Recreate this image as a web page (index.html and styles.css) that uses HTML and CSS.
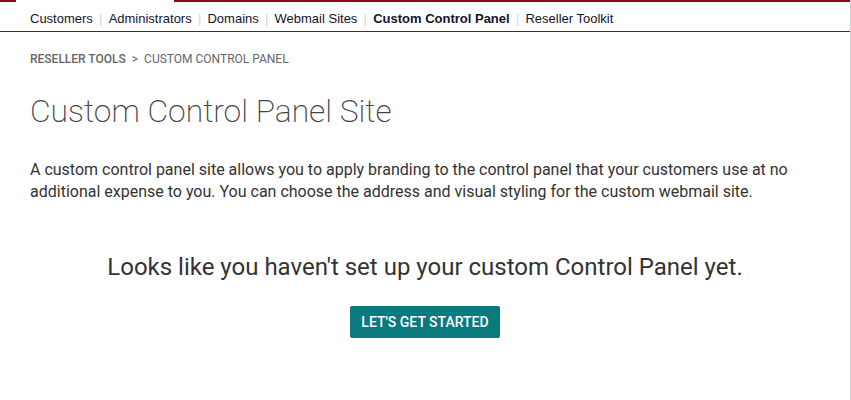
FILE: index.html
```html
<!DOCTYPE html>
<html>
<head>
<meta charset="utf-8">
<link rel="stylesheet" href="styles.css">
</head>
<body>
<div class="page">
  <div class="topline"><span class="seg-a"></span><span class="seg-gap"></span><span class="seg-b"></span></div>
  <nav class="subnav">
    <a class="nav-item">Customers</a><span class="sep">|</span>
    <a class="nav-item">Administrators</a><span class="sep">|</span>
    <a class="nav-item">Domains</a><span class="sep">|</span>
    <a class="nav-item">Webmail Sites</a><span class="sep">|</span>
    <a class="nav-item active">Custom Control Panel</a><span class="sep">|</span>
    <a class="nav-item">Reseller Toolkit</a>
  </nav>
  <main class="content">
    <div class="breadcrumb"><span class="crumb-parent">RESELLER TOOLS</span><span class="crumb-sep">&gt;</span><span class="crumb-current">CUSTOM CONTROL PANEL</span></div>
    <h1 class="title">Custom Control Panel Site</h1>
    <p class="intro">A custom control panel site allows you to apply branding to the control panel that your customers use at no additional expense to you. You can choose the address and visual styling for the custom webmail site.</p>
    <div class="empty">
      <h2 class="empty-title">Looks like you haven't set up your custom Control Panel yet.</h2>
      <button class="btn-start">LET'S GET STARTED</button>
    </div>
  </main>
</div>
</body>
</html>
```
FILE: styles.css
```css
html, body { margin: 0; padding: 0; background: #fff; }
.page {
  width: 851px;
  height: 400px;
  box-sizing: border-box;
  border-right: 1px solid #cfcfcf;
  overflow: hidden;
}
.topline { display: flex; height: 2px; }
.seg-a { width: 16px; background: #8b0a1f; }
.seg-gap { width: 158px; }
.seg-b { flex: 1; background: #8b0a1f; }
.subnav {
  display: flex;
  align-items: center;
  height: 30px;
  padding-left: 30px;
  padding-top: 3px;
  box-sizing: border-box;
  border-bottom: 1px solid #8b0a1f;
  font-family: "Liberation Sans", Arial, sans-serif;
  font-size: 13px;
  color: #14142b;
}
.nav-item { color: #14142b; }
.nav-item.active { font-weight: bold; }
.sep { color: #d4d4d4; margin: 0 6.2px; }
.content {
  padding: 0 30px;
  font-family: Roboto, "Open Sans", sans-serif;
}
.breadcrumb {
  margin-top: 19px;
  font-size: 12px;
  line-height: 16px;
  color: #666;
  display: flex;
  gap: 6px;
}
.crumb-parent { font-weight: 500; }
.title {
  margin: 24px 0 0;
  font-size: 31.8px;
  line-height: 40px;
  font-weight: 200;
  color: #444;
}
.intro {
  margin: 28px 0 0;
  font-size: 16px;
  line-height: 22px;
  color: #333;
}
.empty {
  display: flex;
  flex-direction: column;
  align-items: center;
  margin-top: 49px;
}
.empty-title {
  margin: 0;
  font-size: 24px;
  line-height: 30px;
  font-weight: 400;
  color: #333;
}
.btn-start {
  margin-top: 24px;
  height: 32px;
  padding: 0 11px;
  border: none;
  border-radius: 2px;
  background: #0b7a7f;
  color: #fff;
  font-family: Roboto, sans-serif;
  font-size: 14px;
  font-weight: 500;
}
```
